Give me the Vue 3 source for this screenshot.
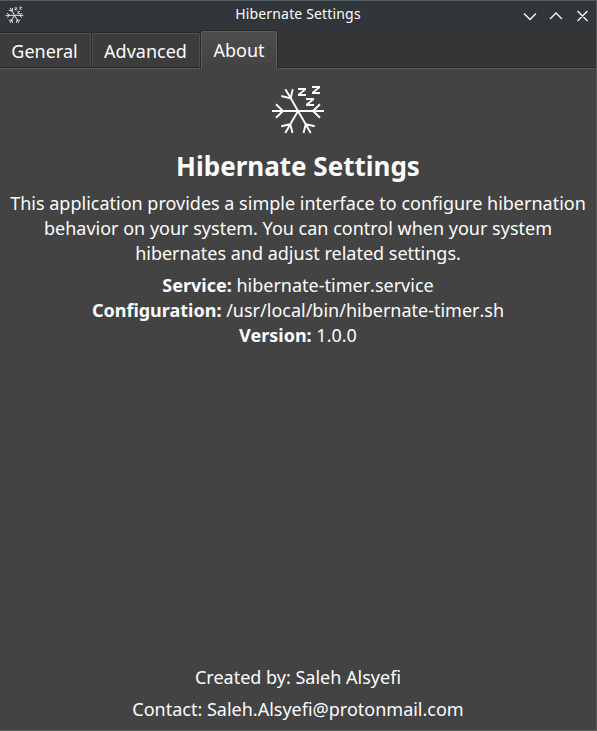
<script setup>
import { h } from 'vue'

const tabs = ['General', 'Advanced', 'About']
const active = 'About'
const info = [
  ['Service:', 'hibernate-timer.service'],
  ['Configuration:', '/usr/local/bin/hibernate-timer.sh'],
  ['Version:', '1.0.0'],
]
const description = [
  'This application provides a simple interface to configure hibernation',
  'behavior on your system. You can control when your system',
  'hibernates and adjust related settings.',
]

const Snowflake = ({ weight }) =>
  h('svg', { viewBox: '0 0 56 52', fill: 'none', stroke: 'currentColor' }, [
    h('path', {
      'stroke-width': weight,
      d: 'M2 27H54M6 20.3L13 27L6 33.7M50 20.3L43 27L50 33.7M28 27L20.7 14L15.3 5.3M28 27L20.3 40.2L15.3 49M28 27L35.7 40.2L40.7 49M11.3 12L20.7 14.3L22.7 5.3M11.3 42.2L20.3 40.2L22.5 49M44.7 42.2L35.7 40.2L33.5 49',
    }),
    h('path', {
      fill: 'currentColor',
      stroke: 'none',
      d: 'M28 4H36V6L31 10H36V12H28V10L33 6H28ZM42 2H50V4L45 8H50V10H42V8L47 4H42ZM36 14H44V16L39 20H44V22H36V20L41 16H36Z',
    }),
  ])
Snowflake.props = ['weight']
</script>

<template>
  <div class="window">
    <header class="titlebar">
      <Snowflake class="app-icon" :weight="2.8" />
      <span class="title">Hibernate Settings</span>
      <svg class="controls" viewBox="0 0 66 16" fill="none" stroke="currentColor" stroke-width="1.25">
        <path d="M1 5.5L7 11.5L13 5.5M27 11L33 5L39 11M54.5 3L64.5 13M64.5 3L54.5 13" />
      </svg>
    </header>
    <nav class="tabs">
      <div v-for="t in tabs" :key="t" class="tab" :class="[t.toLowerCase(), { active: t === active }]">{{ t }}</div>
    </nav>
    <main class="pane">
      <Snowflake class="logo" :weight="1.9" />
      <h1>Hibernate Settings</h1>
      <div class="text description">
        <div v-for="line in description" :key="line">{{ line }}</div>
      </div>
      <div class="text">
        <div v-for="[k, v] in info" :key="k"><b>{{ k }}</b> <span class="value">{{ v }}</span></div>
      </div>
      <footer class="text">
        <div>Created by: Saleh Alsyefi</div>
        <div>Contact: Saleh.Alsyefi@protonmail.com</div>
      </footer>
    </main>
  </div>
</template>

<style>
body {
  background: #434343;
}
</style>

<style scoped>
.window {
  box-sizing: border-box;
  width: 597px;
  height: 731px;
  display: flex;
  flex-direction: column;
  overflow: hidden;
  background: #434343;
  color: #fcfcfc;
  font-family: "Noto Sans", sans-serif;
  border-right: 1px solid #5a5a5a;
  border-bottom: 1px solid #606060;
}
.titlebar {
  box-sizing: border-box;
  flex: none;
  height: 30px;
  display: grid;
  grid-template-columns: 65px 1fr 70px;
  align-items: center;
  padding-left: 5px;
  border-top: 1px solid #555d61;
  background: #31363b;
  margin-right: -1px;
}
.app-icon {
  width: 19px;
  height: 18px;
  margin-top: -2px;
  color: #eceded;
}
.title {
  text-align: center;
  font-size: 14px;
  line-height: 20px;
  letter-spacing: 0.16px;
  margin-top: -3px;
  margin-right: 1px;
}
.controls {
  width: 66px;
  height: 16px;
  margin-left: -4px;
}
.tabs {
  flex: none;
  height: 39px;
  display: flex;
  align-items: flex-start;
  gap: 1px;
  background: linear-gradient(#353535, #353535 37px, #262626 37px, #262626 38px, #5a5a5a 38px);
}
.tab {
  box-sizing: border-box;
  height: 34px;
  margin-top: 3px;
  text-align: center;
  font-size: 18px;
  line-height: 34px;
  background: #3c3c3c;
  border: 1px solid #515151;
  border-bottom: 0;
  border-radius: 2px 2px 0 0;
  box-shadow: 0 0 0 1px #292929;
}
.general {
  width: 92px;
  margin-left: -1px;
  padding-right: 1px;
}
.advanced {
  width: 108px;
  padding-right: 1px;
}
.about {
  width: 76px;
}
.active {
  height: 38px;
  margin-top: 1px;
  line-height: 36px;
  background: linear-gradient(#4d4d4d, #434343);
  border-color: #5e5e5e;
  clip-path: inset(-1px -1px 0 -1px);
}
.pane {
  flex: 1;
  display: flex;
  flex-direction: column;
  align-items: center;
  padding-top: 15px;
}
.logo {
  width: 56px;
  height: 52px;
}
h1 {
  margin: 11px 0 0;
  font-size: 26px;
  line-height: 38px;
}
.text {
  font-size: 18px;
  line-height: 25px;
  text-align: center;
  white-space: nowrap;
}
.value {
  font-kerning: none;
}
.description {
  margin: 6px 0 7px;
}
footer {
  margin-top: auto;
  margin-bottom: 8px;
  display: grid;
  gap: 7px;
}
</style>
